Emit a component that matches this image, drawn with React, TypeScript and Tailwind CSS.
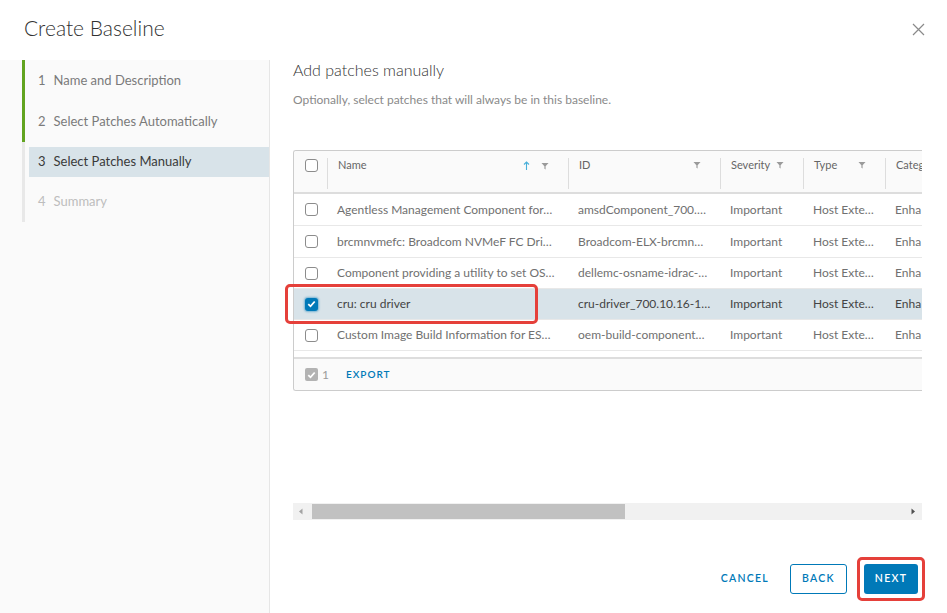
import React from "react";

type Row = {
  name: string;
  id: string;
  severity: string;
  type: string;
  category: string;
  selected?: boolean;
  h: string;
};

const rows: Row[] = [
  { name: "Agentless Management Component for…", id: "amsdComponent_700.…", severity: "Important", type: "Host Exte…", category: "Enha", h: "h-[32px]" },
  { name: "brcmnvmefc: Broadcom NVMeF FC Dri…", id: "Broadcom-ELX-brcmn…", severity: "Important", type: "Host Exte…", category: "Enha", h: "h-[32px]" },
  { name: "Component providing a utility to set OS…", id: "dellemc-osname-idrac-…", severity: "Important", type: "Host Exte…", category: "Enha", h: "h-[31px]" },
  { name: "cru: cru driver", id: "cru-driver_700.10.16-1…", severity: "Important", type: "Host Exte…", category: "Enha", selected: true, h: "h-[31px]" },
  { name: "Custom Image Build Information for ES…", id: "oem-build-component…", severity: "Important", type: "Host Exte…", category: "Enha", h: "h-[31px]" },
];

const steps = [
  { n: "1", label: "Name and Description", state: "done" },
  { n: "2", label: "Select Patches Automatically", state: "done" },
  { n: "3", label: "Select Patches Manually", state: "current" },
  { n: "4", label: "Summary", state: "todo" },
];

function FilterIcon() {
  return (
    <svg width="8" height="8" viewBox="0 0 8 8" className="shrink-0">
      <path d="M0.5 1h7L4.6 4.2V7.5L3.4 6.8V4.2z" fill="#9a9a9a" />
    </svg>
  );
}

function SortUp() {
  return (
    <svg width="7" height="9" viewBox="0 0 7 9" className="shrink-0">
      <path d="M3.5 1v8M1 3.5L3.5 1 6 3.5" stroke="#49afd9" strokeWidth="1.1" fill="none" />
    </svg>
  );
}

function Check({ color = "#fff" }: { color?: string }) {
  return (
    <svg width="9" height="8" viewBox="0 0 9 8">
      <path d="M1.3 4.2l2.2 2.1 4.2-4.8" stroke={color} strokeWidth="1.8" fill="none" />
    </svg>
  );
}

function Box({ checked }: { checked?: boolean }) {
  if (checked) {
    return (
      <span className="flex h-[13px] w-[13px] items-center justify-center rounded-[3px] bg-[#0079b8] shadow-[0_0_2px_1px_rgba(0,121,184,0.45)]">
        <Check />
      </span>
    );
  }
  return <span className="block h-[13px] w-[13px] rounded-[3px] border border-[#8c8c8c] bg-white" />;
}

function HeadCell({ w, label, sort, bare }: { w: string; label: string; sort?: boolean; bare?: boolean }) {
  return (
    <div className={`${w} shrink-0 pt-[7px] pb-[3px] flex`}>
      <div
        className={`flex flex-1 items-start justify-between border-l border-[#dddddd] pl-[10px] ${
          bare ? "pr-0" : "pr-[19px]"
        }`}
      >
        <span className="leading-[14px]">{label}</span>
        {bare ? null : (
          <span className="flex items-center gap-[11px] pt-[3px]">
            {sort ? <SortUp /> : null}
            <FilterIcon />
          </span>
        )}
      </div>
    </div>
  );
}

export default function App() {
  return (
    <div
      className="relative h-[613px] w-[947px] overflow-hidden bg-white text-[#565656]"
      style={{ fontFamily: "Lato, 'Noto Sans', sans-serif" }}
    >
      <header className="flex h-[60px] items-start justify-between pl-6 pr-[22px] pt-[15px]">
        <h1 className="text-[21px] font-light leading-[26px] text-[#313131]">Create Baseline</h1>
        <svg width="13" height="13" viewBox="0 0 13 13" className="mt-[8px]">
          <path d="M1 1l11 11M12 1L1 12" stroke="#8a8a8a" strokeWidth="1.2" />
        </svg>
      </header>

      <div className="flex h-[553px]">
        <nav className="w-[270px] shrink-0 border-r border-[#e6e6e6] bg-[#fafafa]">
          <ul>
            {steps.map((s, i) => (
              <li
                key={s.n}
                className={`ml-[22px] flex items-center border-l-[3px] ${
                  s.state === "done" ? "border-[#62a420]" : "border-[#e8e8e8]"
                } ${i < 2 ? "h-[41px]" : "h-10"}`}
              >
                <div
                  className={`ml-[4px] flex h-[30px] flex-1 items-center gap-2 pl-[9px] text-[13px] ${
                    s.state === "current"
                      ? "bg-[#d8e3e9] text-[#3a3a3a]"
                      : s.state === "done"
                        ? "text-[#7a7a7a]"
                        : "text-[#bdbdbd]"
                  }`}
                >
                  <span>{s.n}</span>
                  <span>{s.label}</span>
                </div>
              </li>
            ))}
          </ul>
        </nav>

        <main className="flex min-w-0 flex-1 flex-col pl-[23px] pr-[25px]">
          <h2 className="text-[16px] font-light leading-[20px] text-[#333333]">Add patches manually</h2>
          <p className="mt-[12px] text-[12px] leading-[16px] text-[#8a8a8a]">
            Optionally, select patches that will always be in this baseline.
          </p>

          <div className="relative mt-[42px]">
            <div className="overflow-hidden rounded-l-[3px] border-y border-l border-[#cccccc]">
              <div className="w-[660px]">
                <div className="flex h-[43px] border-b-2 border-[#dddddd] bg-[#fafafa] text-[11px] text-[#666666]">
                  <div className="w-[33px] shrink-0 pl-[11px] pt-[8px]">
                    <Box />
                  </div>
                  <HeadCell w="w-[241px]" label="Name" sort />
                  <HeadCell w="w-[152px]" label="ID" />
                  <HeadCell w="w-[83px]" label="Severity" />
                  <HeadCell w="w-[82px]" label="Type" />
                  <HeadCell w="w-[60px]" label="Categ" bare />
                </div>

                {rows.map((r) => (
                  <div
                    key={r.name}
                    className={`flex ${r.h} items-center border-b border-[#e8e8e8] text-[12px] ${
                      r.selected ? "bg-[#d8e3e9] text-[#444444]" : "text-[#707070]"
                    }`}
                  >
                    <div className="w-[33px] shrink-0 pl-[11px]">
                      <Box checked={r.selected} />
                    </div>
                    <div className="w-[241px] shrink-0 truncate pl-[10px]">{r.name}</div>
                    <div className="w-[152px] shrink-0 truncate pl-[10px]">{r.id}</div>
                    <div className="w-[83px] shrink-0 pl-[10px]">{r.severity}</div>
                    <div className="w-[82px] shrink-0 pl-[10px]">{r.type}</div>
                    <div className="w-[60px] shrink-0 pl-[10px]">{r.category}</div>
                  </div>
                ))}

                <div className="h-[6px]" />
                <div className="flex h-[33px] items-center border-t-2 border-[#dddddd] bg-[#fafafa] pl-[11px]">
                  <span className="flex h-[13px] w-[13px] items-center justify-center rounded-[2px] bg-[#b3b3b3]">
                    <Check />
                  </span>
                  <span className="ml-[4px] text-[12px] text-[#9a9a9a]">1</span>
                  <span className="ml-[17px] text-[10px] font-semibold tracking-[0.1em] text-[#0079b8]">EXPORT</span>
                </div>
              </div>
            </div>
            <div className="pointer-events-none absolute left-[-8px] top-[134px] h-[40px] w-[253px] rounded-[5px] border-[3px] border-[#e5403a]" />
          </div>

          <div className="mt-[112px] flex h-[17px] items-center bg-[#f1f1f1]">
            <svg width="10" height="17" viewBox="0 0 10 17" className="ml-[3px]">
              <path d="M6.5 5.5v6L3 8.5z" fill="#a3a3a3" />
            </svg>
            <div className="ml-[6px] h-[15px] w-[313px] bg-[#c1c1c1]" />
            <div className="flex-1" />
            <svg width="10" height="17" viewBox="0 0 10 17" className="mr-[4px]">
              <path d="M3.5 5.5v6L7 8.5z" fill="#505050" />
            </svg>
          </div>

          <div className="mt-[37px] flex items-center justify-end">
            <button className="h-[30px] px-3 text-[10.5px] font-semibold tracking-[0.12em] text-[#0079b8]">
              CANCEL
            </button>
            <button className="ml-[9px] h-[30px] w-[57px] rounded-[3px] border border-[#0079b8] text-[10.5px] font-semibold tracking-[0.12em] text-[#0079b8]">
              BACK
            </button>
            <div className="ml-[10px] mr-[-3px] rounded-[5px] border-[3px] border-[#e5403a] p-[4px]">
              <button className="h-[30px] w-[54px] rounded-[3px] bg-[#0079b8] text-[10.5px] font-semibold tracking-[0.12em] text-white">
                NEXT
              </button>
            </div>
          </div>
        </main>
      </div>
    </div>
  );
}
